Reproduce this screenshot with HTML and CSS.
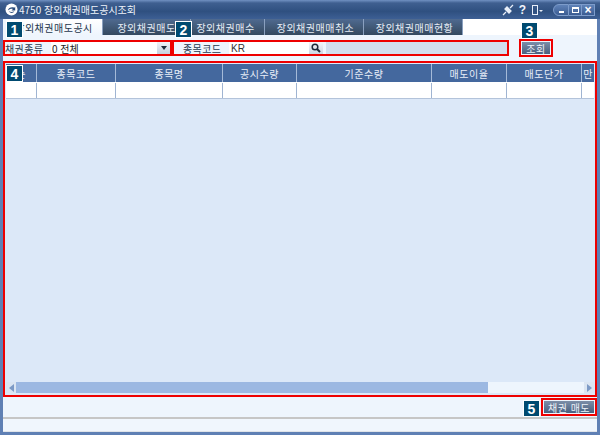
FILE: index.html
```html
<!DOCTYPE html>
<html lang="ko">
<head>
<meta charset="utf-8">
<title>4750 장외채권매도공시조회</title>
<link rel="stylesheet" href="styles.css">
</head>
<body>
<div class="window">
  <header class="titlebar">
    <svg class="logo" width="13" height="13" viewBox="0 0 14 14"><circle cx="7" cy="7" r="6.500" fill="#fff"/><path d="M3 8c1-3 4-4 7-3l1-1v4H7l1.500-1.500C7 6 5 6.500 3 8zM4 9c2 1 4 1 6 0-1 2-4 2.500-6 0z" fill="#2b4c7c"/></svg>
    <span class="title">4750 장외채권매도공시조회</span>
    <div class="title-tools">
      <svg width="12" height="12" viewBox="0 0 12 12"><path d="M1 11l3-3M8 4l3-3M3 5l4 4 2-2-4-4z" stroke="#e8eef8" stroke-width="1.300" fill="#e8eef8"/></svg>
      <span class="help">?</span>
      <svg width="12" height="12" viewBox="0 0 12 12"><rect x="1.500" y="1.500" width="5" height="9" fill="none" stroke="#e8eef8"/><path d="M8 6h4l-2 2z" fill="#e8eef8"/></svg>
      <div class="winbtns">
        <span class="winbtn first"><i class="min"></i></span>
        <span class="winbtn"><i class="max"></i></span>
        <span class="winbtn close">×</span>
      </div>
    </div>
  </header>

  <div class="client">
    <nav class="tabs">
      <span class="tab active t1">장외채권매도공시</span>
      <span class="tab t2">장외채권매도</span>
      <span class="tab t3">장외채권매수</span>
      <span class="tab t4">장외채권매매취소</span>
      <span class="tab t5">장외채권매매현황</span>
      <span class="tab-rest"></span>
    </nav>

    <div class="toolbar">
      <div class="redbox filter1">
        <span class="label">채권종류</span>
        <div class="combo"><span class="combo-text">0 전체</span><span class="combo-btn"></span></div>
      </div>
      <div class="redbox filter2">
        <span class="label code-label">종목코드</span>
        <div class="code-input"><span>KR</span></div>
        <span class="search-btn">
          <svg width="10" height="10" viewBox="0 0 10 10"><circle cx="4" cy="4" r="2.800" fill="none" stroke="#1d2a3a" stroke-width="1.500"/><path d="M6 6l3 3" stroke="#1d2a3a" stroke-width="2"/></svg>
        </span>
        <div class="name-field"></div>
      </div>
      <div class="redbox query"><span class="btn query-btn">조회</span></div>
    </div>

    <section class="redbox gridbox">
      <div class="grid-row head">
        <span class="c0">순</span><span class="c1">종목코드</span><span class="c2">종목명</span><span class="c3">공시수량</span><span class="c4">기준수량</span><span class="c5">매도이율</span><span class="c6">매도단가</span><span class="c7">만</span>
      </div>
      <div class="grid-row body">
        <span class="c0"></span><span class="c1"></span><span class="c2"></span><span class="c3"></span><span class="c4"></span><span class="c5"></span><span class="c6"></span><span class="c7"></span>
      </div>
      <div class="grid-empty"></div>
      <div class="hscroll">
        <span class="arrow left"></span>
        <div class="track"><div class="thumb"></div></div>
        <span class="arrow right"></span>
      </div>
    </section>

    <div class="actions">
      <div class="redbox sell"><span class="btn sell-btn">채권 매도</span></div>
    </div>
    <div class="status"></div>

    <b class="badge b1">1</b>
    <b class="badge b2">2</b>
    <b class="badge b3">3</b>
    <b class="badge b4">4</b>
    <b class="badge b5">5</b>
  </div>
</div>
</body>
</html>
```

FILE: styles.css
```css
* { box-sizing: border-box; }
html, body { margin: 0; padding: 0; }
body {
  width: 600px; height: 435px; overflow: hidden;
  font-family: "Noto Sans CJK KR", "Liberation Sans", sans-serif;
  font-size: 10px; color: #222;
}
.window {
  width: 600px; height: 435px; display: flex; flex-direction: column;
  background: #5f80b4; padding: 0 3px 3px;
}
.titlebar {
  height: 19px; flex: none; display: flex; align-items: center;
  margin: 0 -3px; padding: 0 5px 0 5px;
  background: linear-gradient(#7191c2 0, #3f5f90 3px, #2f5080 60%, #3d5f94 100%);
  color: #eef3fb;
}
.logo { margin-right: 1px; }
.title { font-size: 10px; }
.title-tools { margin-left: auto; display: flex; align-items: center; gap: 5px; }
.help { font: bold 12px "Liberation Sans", sans-serif; color: #f0f4fb; }
.winbtns { display: flex; margin-left: 5px; height: 12px; }
.winbtn {
  width: 13px; height: 12px; border: 1px solid #7d9ccb; border-left-width: 0;
  background: linear-gradient(#5f82b8, #3a5c92);
  display: flex; align-items: center; justify-content: center;
  color: #fff; font: bold 12px "Liberation Sans", sans-serif;
}
.winbtn.first { width: 16px; border-left-width: 1px; border-radius: 6px 0 0 6px; }
.min { width: 5px; height: 2px; background: #fff; margin-top: 5px; }
.max { width: 7px; height: 6px; border: 1px solid #fff; border-top-width: 2px; }
.client {
  position: relative; flex: 1; min-height: 0; display: flex; flex-direction: column;
  background: #eef5fd;
}
.tabs { display: flex; height: 16px; flex: none; padding-left: 3px; background: #eef5fd; }
.tab {
  height: 16px; display: flex; align-items: center; justify-content: center;
  background: linear-gradient(#4f6a90, #34495f); color: #e6edf6;
  border-right: 1px solid #8aa0bf; font-size: 10px; letter-spacing: .5px; white-space: nowrap; overflow: hidden;
}
.tab.active { background: linear-gradient(#fff, #eef5fd); color: #25364c; }
.t1 { width: 97px; }
.t2 { width: 88px; }
.t3 { width: 74px; padding-right: 4px; }
.t4 { width: 99px; padding-left: 3px; }
.t5 { width: 99px; padding-left: 3px; }
.tab-rest { flex: 1; background: #fff; }
.redbox { border: 2px solid #ee0000; }
.toolbar { height: 26px; flex: none; display: flex; align-items: flex-start; padding-top: 5px; background: #eef5fd; position: relative; }
.filter1 { width: 169px; height: 16px; display: flex; align-items: center; background: #fff; }
.label { width: 46px; flex: none; background: #eef5fd; height: 100%; display: flex; align-items: center; color: #2a3a50; letter-spacing: .4px; }
.combo { flex: 1; height: 12px; display: flex; align-items: center; background: #fff; }
.combo-text { flex: 1; padding-left: 1px; }
.combo-btn { width: 13px; height: 12px; background: linear-gradient(#eef2f8, #c6d0de); position: relative; display: flex; align-items: center; justify-content: center; }
.combo-btn::after { content: ""; border: 3px solid transparent; border-top: 4px solid #1d2a3a; border-bottom: 0; }
.filter2 { width: 337px; height: 16px; display: flex; align-items: center; background: #eef5fd; }
.code-label { width: 55px; justify-content: flex-start; padding-left: 9px; }
.code-input { width: 80px; height: 12px; background: #fff; display: flex; align-items: center; padding-left: 2px; color: #333; }
.code-input span { font: 10px "Liberation Sans", sans-serif; }
.search-btn { width: 14px; height: 12px; background: linear-gradient(#f4f6fa, #ccd6e4); display: flex; align-items: center; justify-content: center; }
.name-field { flex: 1; height: 12px; margin-left: 3px; background: #d2deee; }
.query { width: 34px; height: 18px; margin-left: 10px; margin-top: -1px; padding: 1px; background: #eef5fd; display: flex; }
.btn {
  flex: 1; display: flex; align-items: center; justify-content: center;
  background: linear-gradient(#7c8ea8, #49607f); color: #eef2f8; letter-spacing: .5px; white-space: nowrap;
}
.gridbox {
  height: 336px; flex: none; display: flex; flex-direction: column;
  background: #dce8f8; padding: 1px;
}
.grid-row { display: flex; flex: none; }
.grid-row span { flex: none; border-right: 1px solid #9fb4d2; overflow: hidden; }
.head { height: 18px; background: #44689e; }
.head span { display: flex; align-items: center; justify-content: center; color: #e8eef8; letter-spacing: .5px; white-space: nowrap; border-right-color: #a5bad8; }
.body { height: 17px; background: #fff; border-top: 1px solid #fff; border-bottom: 1px solid #b3c3da; }
.c0 { width: 31px; }
.c1 { width: 79px; }
.c2 { width: 107px; }
.c3 { width: 74px; }
.c4 { width: 135px; }
.c5 { width: 75px; }
.c6 { width: 75px; }
.c7 { flex: 1 1 0 !important; border-right: 0 !important; }
.grid-empty { flex: 1; }
.hscroll { height: 11px; flex: none; display: flex; align-items: center; background: #e8f0fa; margin-bottom: 1px; }
.arrow { width: 10px; height: 11px; flex: none; background: #dbe5f2; display: flex; align-items: center; justify-content: center; }
.arrow.left::after { content: ""; border: 4px solid transparent; border-left: 0; border-right: 5px solid #7d9ac6; }
.arrow.right::after { content: ""; border: 4px solid transparent; border-right: 0; border-left: 5px solid #7d9ac6; }
.track { flex: 1; height: 11px; background: #eef5fd; }
.thumb { width: 472px; height: 11px; background: #9cb8e2; }
.actions { height: 20px; flex: none; display: flex; justify-content: flex-end; align-items: center; background: #eef5fd; }
.sell { width: 56px; height: 18px; padding: 1px; display: flex; }
.status { flex: 1; border-top: 2px solid #c6c6c6; border-bottom: 1px solid #dfe3e8; background: #f0f6fd; }
.badge {
  position: absolute; width: 17px; height: 17px; border: 1px solid #fff;
  background: #004a70; color: #fff; display: flex; align-items: center; justify-content: center;
  font: bold 14px "Liberation Sans", sans-serif;
}
.b1 { left: 3px; top: 2px; }
.b2 { left: 172px; top: 2px; }
.b3 { left: 518px; top: 3px; }
.b4 { left: 3px; top: 46px; }
.b5 { left: 520px; top: 381px; }
```
